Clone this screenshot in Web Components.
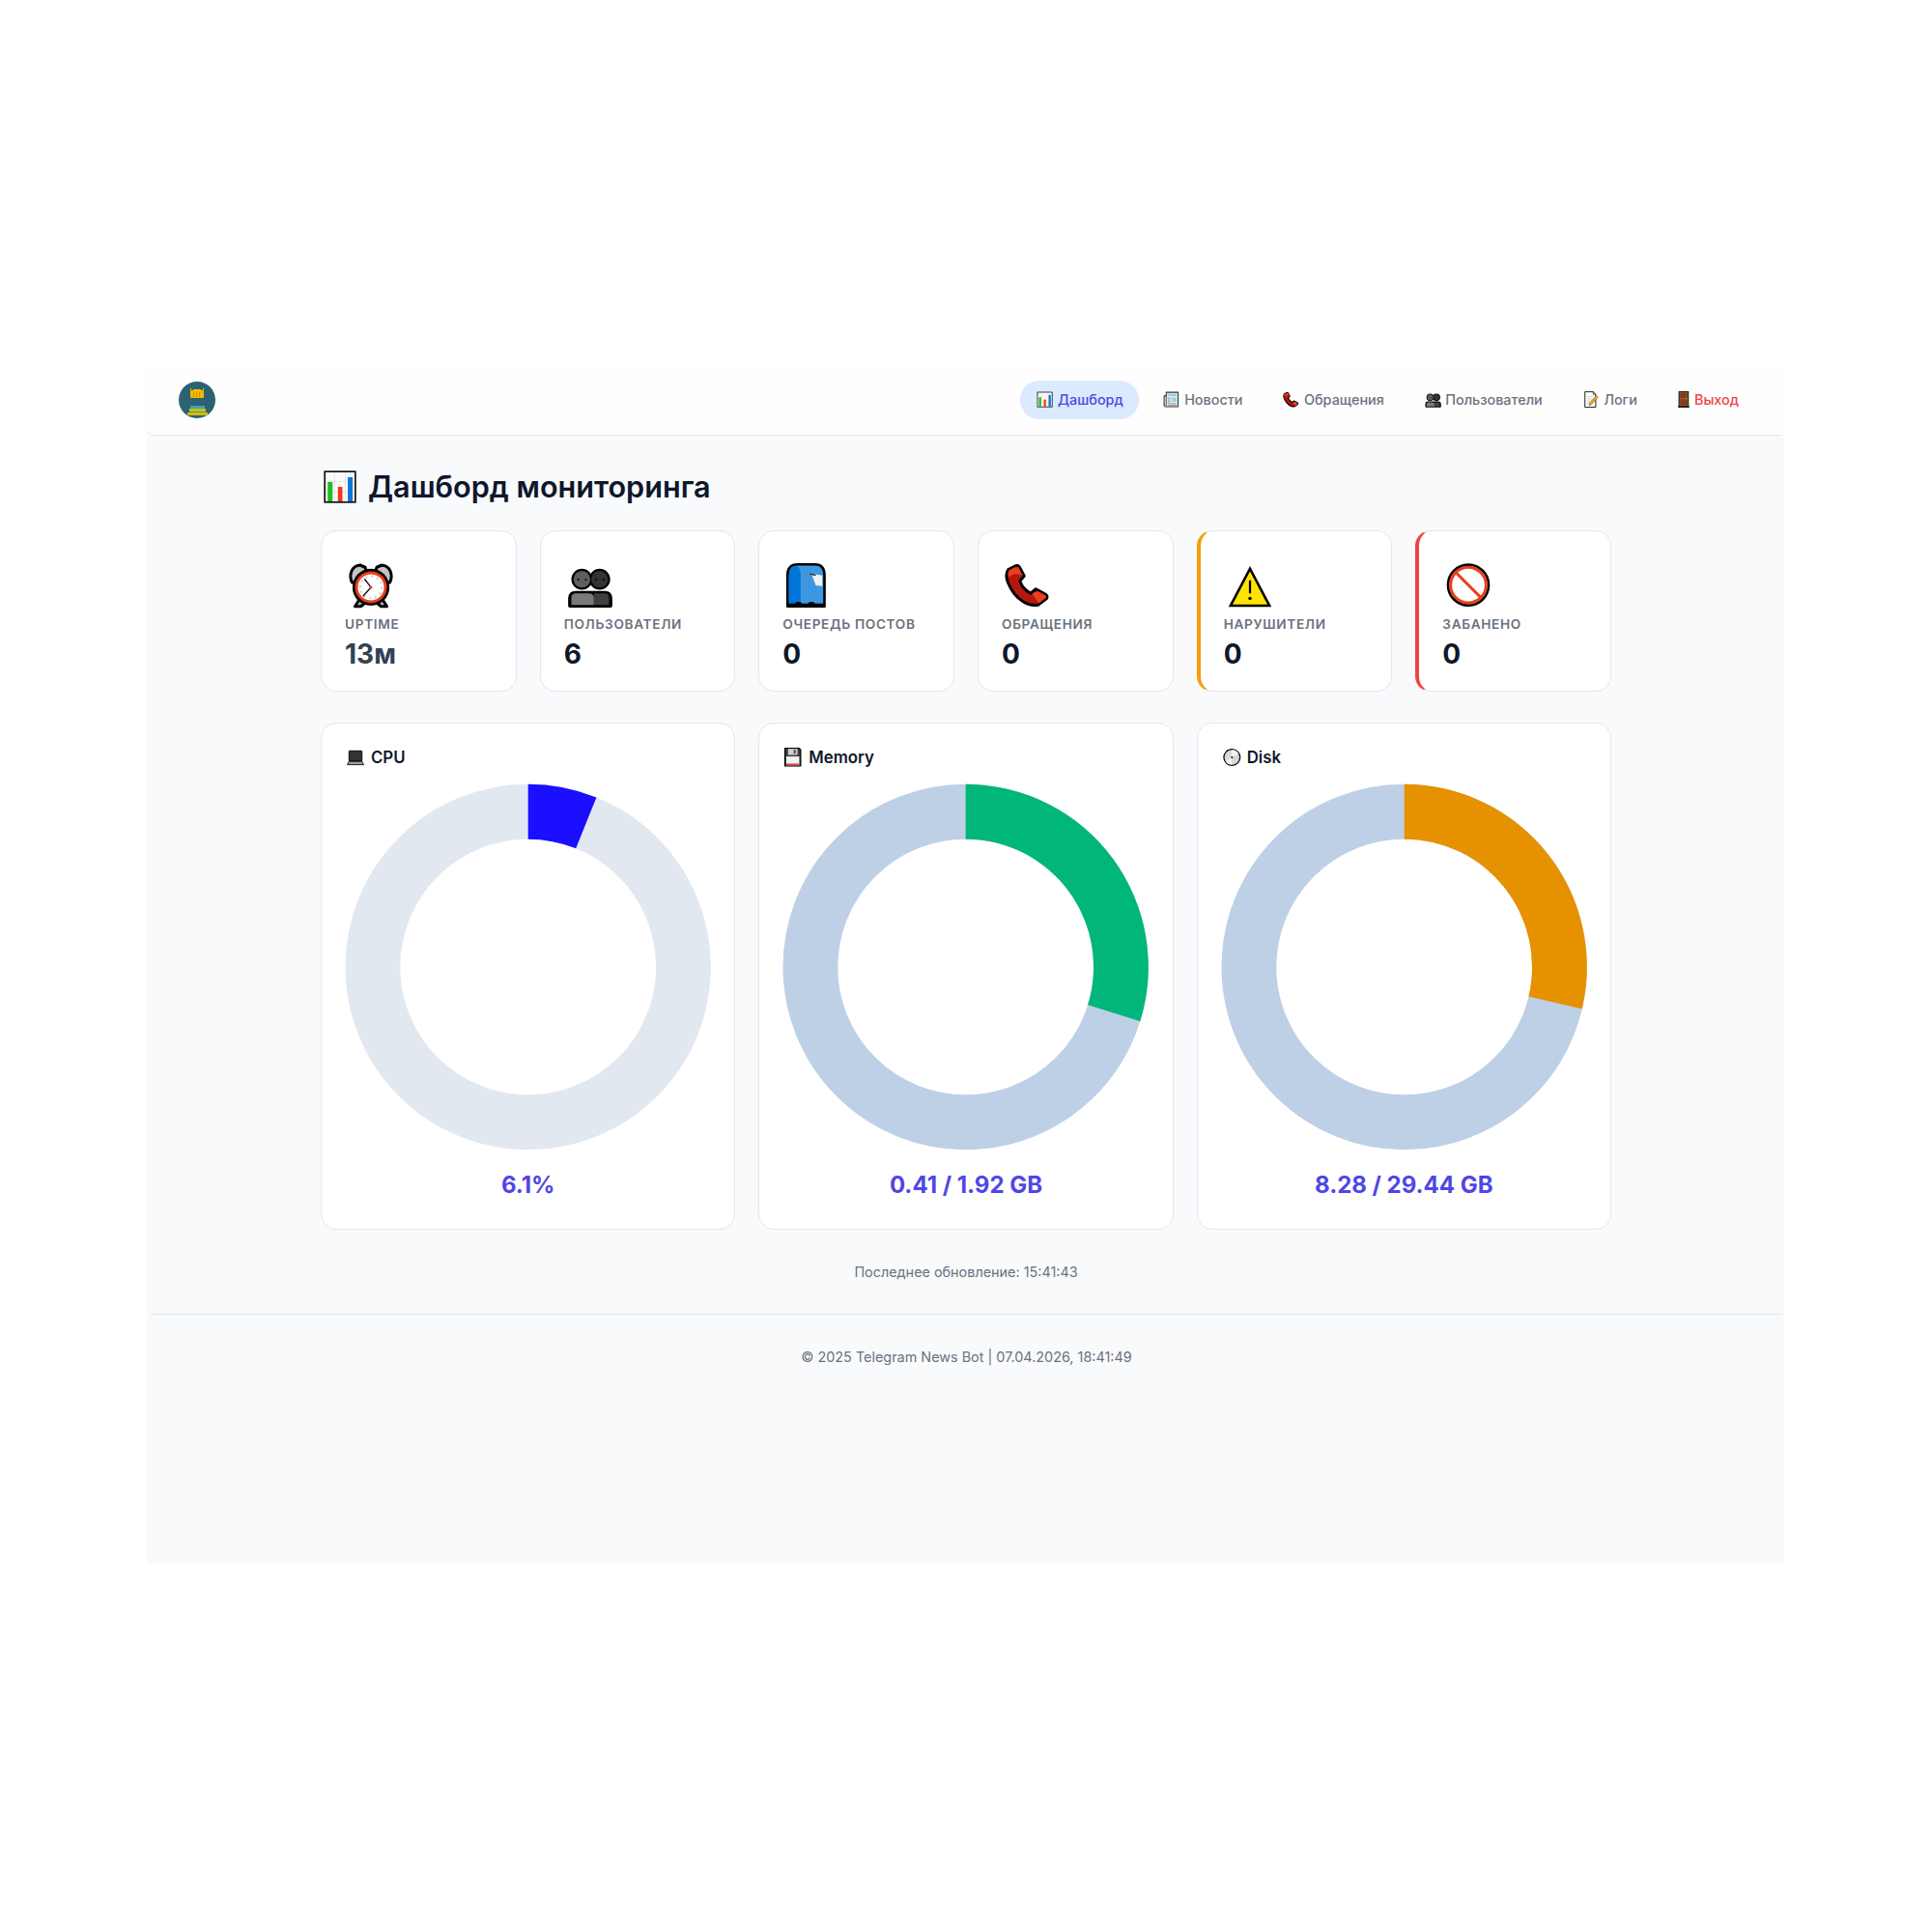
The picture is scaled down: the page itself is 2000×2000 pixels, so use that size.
<!DOCTYPE html>
<html lang="ru"><head><meta charset="utf-8"><title>Дашборд</title>
<style>
html,body{margin:0;background:#fff}
body{font-family:Inter,"Noto Sans",sans-serif;padding:380px 0 0 152px}
</style></head><body>
<dash-app>
  <app-header slot="header">
    <nav-link active icon="chart">Дашборд</nav-link>
    <nav-link icon="news">Новости</nav-link>
    <nav-link icon="phone">Обращения</nav-link>
    <nav-link icon="people">Пользователи</nav-link>
    <nav-link icon="memo">Логи</nav-link>
    <nav-link danger icon="door">Выход</nav-link>
  </app-header>
  <stat-card icon="alarm" label="Uptime" value="13м" muted></stat-card>
  <stat-card icon="people" label="Пользователи" value="6"></stat-card>
  <stat-card icon="mailbox" label="Очередь постов" value="0"></stat-card>
  <stat-card icon="phone" label="Обращения" value="0"></stat-card>
  <stat-card icon="warning" label="Нарушители" value="0" accent="#f59e0b"></stat-card>
  <stat-card icon="noentry" label="Забанено" value="0" accent="#ef4444"></stat-card>
  <chart-card slot="charts" icon="laptop" name="CPU" pct="6.1" color="#1a10ff" track="#e2e8f0" value="6.1%"></chart-card>
  <chart-card slot="charts" icon="floppy" name="Memory" pct="29.8" color="#00b67a" track="#bdd0e6" value="0.41 / 1.92 GB"></chart-card>
  <chart-card slot="charts" icon="disc" name="Disk" pct="28.7" color="#e69100" track="#bdd0e6" value="8.28 / 29.44 GB"></chart-card>
</dash-app>
<script>
const ICONS={
chart:`<rect x="7.500" y="7.500" width="57" height="57" fill="#fafafa" stroke="#111" stroke-width="3"/><path d="M26 9v54M46 9v54M9 26h54M9 46h54" stroke="#e2e2e2" stroke-width="1.500"/><rect x="13" y="27" width="9" height="36" fill="#1dbf1d"/><rect x="32" y="36" width="8.500" height="27" fill="#ef3a1d"/><rect x="50.500" y="18" width="9" height="45" fill="#0a78dc"/>`,
news:`<path d="M16 8H62V64H14Q8 64 8 58V22H16Z" fill="#e8e8e8" stroke="#333" stroke-width="4" stroke-linejoin="round"/><path d="M16 22V60" stroke="#333" stroke-width="3"/><rect x="22" y="14" width="34" height="9" fill="#92d3f5"/><rect x="38" y="29" width="18" height="16" fill="#92d3f5"/><path d="M22 31h11M22 38h11M22 45h11M22 52h34M22 58h34" stroke="#8a8a8a" stroke-width="3"/>`,
phone:`<path d="M19 9L9 14Q4 22 9 33Q16 50 29 58Q40 65 50 63L62 54Q64 50 60 48L47 41L40 47Q34 44 29 38Q26 33 25 30L31 23L24 10Q22 8 19 9Z" fill="#b5170f" stroke="#000" stroke-width="4" stroke-linejoin="round"/><path d="M18 11L10 15Q8 20 9 24L19 20L29 22L23 11Z" fill="#ea3f1c"/><path d="M50 44L42 47L51 61L61 53Q62 50 59 49Z" fill="#ea3f1c"/>`,
people:`<g stroke="#000" stroke-width="5" fill="#000" stroke-linejoin="round"><circle cx="24.500" cy="27.500" r="12"/><circle cx="49" cy="27.500" r="12"/><path d="M8 64V54Q8 46 16 46H56Q64 46 64 54V64Z"/></g><circle cx="49" cy="27.500" r="11.500" fill="#333"/><circle cx="24.500" cy="27.500" r="11.500" fill="#5f5f5f"/><path d="M41 63V47H56Q62 47 62 53V63Z" fill="#3f3f3f"/><path d="M10 63V53Q10 47 16 47H34Q41 47 41 53V63Z" fill="#7a7a7a"/><circle cx="19.500" cy="28" r="1.400"/><circle cx="30" cy="28" r="1.400"/><circle cx="44" cy="28" r="1.400"/><circle cx="54.500" cy="28" r="1.400"/>`,
memo:`<path d="M14 6H46L56 16V66H14Z" fill="#fff" stroke="#111" stroke-width="3.500" stroke-linejoin="round"/><path d="M46 6V16H56" fill="none" stroke="#111" stroke-width="2.500"/><path d="M21 24h24M21 33h20M21 42h14M21 51h10" stroke="#bbb" stroke-width="2.500"/><path d="M58 20L65 26L40 54L30 60L33 48Z" fill="#f1b31c" stroke="#444" stroke-width="2" stroke-linejoin="round"/>`,
door:`<rect x="18" y="6" width="36" height="58" fill="#a5552a" stroke="#1a1a1a" stroke-width="4"/><rect x="23" y="12" width="26" height="18" fill="#7d3f1e"/><rect x="23" y="35" width="26" height="23" fill="#7d3f1e"/><circle cx="47" cy="33" r="2.500" fill="#f1b31c"/><rect x="14" y="62" width="44" height="5" fill="#111"/>`,
alarm:`<path d="M10 32C5 22 9 9 21 8L28 11L30 18L15 32Z" fill="#c4c4c4" stroke="#000" stroke-width="4" stroke-linejoin="round"/><path d="M62 32C67 22 63 9 51 8L44 11L42 18L57 32Z" fill="#c4c4c4" stroke="#000" stroke-width="4" stroke-linejoin="round"/><path d="M19 57L14 65H22L27 61M53 57L58 65H50L45 61" fill="#bbb" stroke="#000" stroke-width="4" stroke-linejoin="round"/><circle cx="36" cy="38.500" r="25.500" fill="#000"/><circle cx="36" cy="38.500" r="22" fill="#ea3f1c"/><circle cx="36" cy="38.500" r="18" fill="#fff"/><circle cx="36" cy="38.500" r="15" fill="none" stroke="#bdbdbd" stroke-width="2.500" stroke-dasharray="2 5.850"/><path d="M27 27L36 38.500L25 51" fill="none" stroke="#111" stroke-width="1.800"/><circle cx="36" cy="38.500" r="2" fill="#ea3f1c"/>`,
mailbox:`<path d="M7 65V22Q7 7 21 7H45Q58 7 58 22V65Z" fill="#3d97e0" stroke="#000" stroke-width="3.500" stroke-linejoin="round"/><path d="M9 63V22Q9 9 18 9Q25 10 25 22V63Z" fill="#0075d8"/><path d="M37 21H50V34H55V21Z" fill="#2a6fb0"/><path d="M40 20L55 22V37L46 36Z" fill="#f0f0f0"/><path d="M38 20L46 22" stroke="#333" stroke-width="2"/><path d="M7 65V61H17L19 59H25L27 61H35L37 59H43L45 61H58V65Z" fill="#000"/>`,
warning:`<path d="M36 13L62.800 64H9.200Z" fill="#ffe400" stroke="#000" stroke-width="3.500" stroke-linejoin="miter"/><path d="M36 29V47" stroke="#000" stroke-width="3"/><circle cx="36" cy="54" r="2.300"/>`,
noentry:`<circle cx="36" cy="35.500" r="28" fill="#fff" stroke="#000" stroke-width="3.500"/><circle cx="36" cy="35.500" r="24.500" fill="none" stroke="#ea3f1c" stroke-width="4"/><path d="M19 18.500L53 52.500" stroke="#ea3f1c" stroke-width="4"/>`,
laptop:`<rect x="14" y="14" width="44" height="35" rx="2" fill="#333" stroke="#000" stroke-width="3"/><path d="M8 61L14 50H58L64 61Z" fill="#a0a0a0" stroke="#111" stroke-width="3" stroke-linejoin="round"/>`,
floppy:`<path d="M8 5H57L62 10V65H8Z" fill="#3a3a3a" stroke="#000" stroke-width="3.500" stroke-linejoin="round"/><rect x="19" y="7" width="32" height="21" fill="#d0d0d0"/><rect x="38" y="10" width="7" height="14" fill="#555"/><rect x="13" y="33" width="44" height="30" fill="#f4f4f4"/><rect x="13" y="57" width="44" height="6" fill="#ea3f5a"/>`,
disc:`<circle cx="37" cy="36" r="27.500" fill="#d8d8d8" stroke="#000" stroke-width="4"/><path d="M37 36L37 11A25 25 0 0 1 59 24Z" fill="#f4f4f4"/><path d="M37 36L37 61A25 25 0 0 1 15 48Z" fill="#f4f4f4"/><circle cx="37" cy="36" r="3.500" fill="#222"/>`
};
customElements.define('emo-icon',class extends HTMLElement{constructor(){super();
const n=this.getAttribute('name'),s=this.getAttribute('size'),vb=this.getAttribute('vb')||'0 0 72 72',p=vb.split(' ').map(Number);
this.attachShadow({mode:'open'}).innerHTML=`<style>:host{display:block;flex:none;line-height:0}svg{display:block}</style><svg width="${s*p[2]/72}" height="${s*p[3]/72}" viewBox="${vb}" aria-label="${n}">${ICONS[n]}</svg>`}});
customElements.define('dash-app',class extends HTMLElement{constructor(){super();this.attachShadow({mode:'open'}).innerHTML=`
<style>
:host{display:flex;flex-direction:column;width:1695px;height:1239px;background:#f8fafc;color:#0f172a}
main{width:1336px;margin:0 0 0 180px;padding-top:28px;display:flex;flex-direction:column}
h1{margin:0 0 20px;font-size:30.600px;line-height:50px;font-weight:600;color:#0f172a;display:flex;align-items:center;align-self:flex-start;gap:9px;height:50px}
.stats{display:grid;grid-template-columns:repeat(6,1fr);gap:24px}
.charts{display:grid;grid-template-columns:repeat(3,1fr);gap:24px;margin-top:32px}
.upd{text-align:center;font-size:14.400px;line-height:20px;color:#6b7280;margin-top:34px}
footer{margin:33px 2px 0 4px;border-top:1px solid #e2e8f0;padding-top:34px;text-align:center;font-size:14.400px;line-height:20px;color:#6b7280}
</style>
<slot name="header"></slot>
<main>
<h1><emo-icon name="chart" size="40"></emo-icon><span>Дашборд мониторинга</span></h1>
<div class="stats"><slot></slot></div>
<div class="charts"><slot name="charts"></slot></div>
<div class="upd">Последнее обновление: 15:41:43</div>
</main>
<footer>© 2025 Telegram News Bot | 07.04.2026, 18:41:49</footer>`}});
customElements.define('app-header',class extends HTMLElement{constructor(){super();this.attachShadow({mode:'open'}).innerHTML=`
<style>
:host{display:block;background:#fefefe;height:71px;position:relative}
.bar{height:68px;padding:0 29px 2px 29px;margin:0 2px 0 4px;border-bottom:1px solid #e2e8f0;display:flex;align-items:center;justify-content:space-between}
nav{display:flex;gap:8.750px}
.tick{position:absolute;left:0;top:68px;width:4px;height:1px;background:#e2e8f0}
svg{display:block}
</style>
<div class="tick"></div>
<div class="bar">
<svg width="38" height="38" viewBox="0 0 38 38" role="img" aria-label="logo">
<circle cx="19" cy="19" r="19" fill="#2c6274"/>
<rect x="12" y="9" width="14" height="8" rx="1" fill="#f5b800"/>
<path d="M12 7h1v2h-1zM25 7h1v2h-1zM15 8h8v1h-8z" fill="#f5c800"/>
<path d="M15.500 11v5M18.500 11v5M21.500 11v5" stroke="#d98f00"/>
<rect x="12" y="25" width="15" height="3" fill="#3fa3b8"/>
<rect x="11" y="28" width="17" height="3.500" fill="#c9bd1e"/>
<rect x="9" y="32" width="21" height="3" fill="#c9bd1e"/>
</svg>
<nav><slot></slot></nav>
</div>`}});
customElements.define('nav-link',class extends HTMLElement{constructor(){super();const a=this.hasAttribute('active');const d=this.hasAttribute('danger');this.attachShadow({mode:'open'}).innerHTML=`
<style>
:host{display:block}
a{display:flex;align-items:center;gap:3.500px;height:40px;line-height:40px;padding:0 16px;border-radius:20px;font-size:14.400px;font-weight:450;white-space:nowrap;color:${a?'#4f46e5':d?'#ef4444':'#6b7280'};background:${a?'#dbeafe':'transparent'}}
</style><a><emo-icon name="${this.getAttribute('icon')}" size="19.200" ${d?'vb="10 0 56 72"':''}></emo-icon><span><slot></slot></span></a>`}});
customElements.define('stat-card',class extends HTMLElement{constructor(){super();const g=k=>this.getAttribute(k);const ac=g('accent');this.attachShadow({mode:'open'}).innerHTML=`
<style>
:host{display:block}
.c{box-sizing:border-box;height:167px;background:#fff;border:1px solid #e2e8f0;${ac?`border-left:4px solid ${ac};`:''}border-radius:16px;padding:29px 24px 0}
.l{font-size:13.600px;line-height:20px;font-weight:600;letter-spacing:.68px;text-transform:uppercase;color:#6b7280;margin-top:3px}
.v{font-size:28px;line-height:38px;font-weight:700;color:${this.hasAttribute('muted')?'#334155':'#0f172a'};margin-top:2px}
</style><div class="c"><emo-icon name="${g('icon')}" size="54"></emo-icon><div class="l">${g('label')}</div><div class="v">${g('value')}</div></div>`}});
customElements.define('chart-card',class extends HTMLElement{constructor(){super();const g=k=>this.getAttribute(k);
const S=380,c=S/2,R=189.5,r=132.6,t=g('pct')/100*2*Math.PI,p=(q,a)=>[(c+q*Math.sin(a)).toFixed(2),(c-q*Math.cos(a)).toFixed(2)].join(' ');
const seg=`M${p(R,0)}A${R} ${R} 0 ${t>Math.PI?1:0} 1 ${p(R,t)}L${p(r,t)}A${r} ${r} 0 ${t>Math.PI?1:0} 0 ${p(r,0)}Z`;
this.attachShadow({mode:'open'}).innerHTML=`
<style>
:host{display:block}
.c{box-sizing:border-box;height:525px;background:#fff;border:1px solid #e2e8f0;border-radius:16px;padding:24px;display:flex;flex-direction:column}
.t{font-size:16.800px;line-height:22px;font-weight:600;color:#0f172a;height:38px;display:flex;align-items:flex-start;gap:5px}
svg{display:block;width:100%;height:380px;flex:none}
.v{text-align:center;font-size:24px;line-height:32px;font-weight:700;color:#4f46e5;margin-top:19.500px}
</style><div class="c"><div class="t"><emo-icon name="${g('icon')}" size="22"></emo-icon><span>${g('name')}</span></div>
<svg viewBox="0 0 ${S} ${S}"><circle cx="${c}" cy="${c}" r="${(R+r)/2}" fill="none" stroke="${g('track')}" stroke-width="${R-r}"/><path d="${seg}" fill="${g('color')}"/></svg>
<div class="v">${g('value')}</div></div>`}});
</script>
</body></html>
